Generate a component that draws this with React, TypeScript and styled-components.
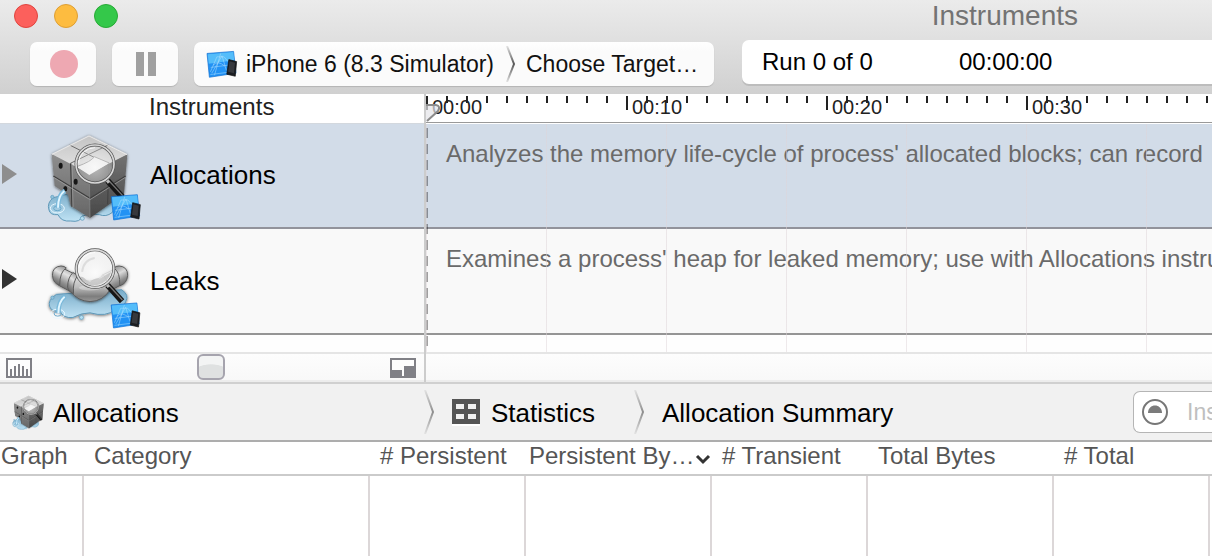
import React from "react";
import styled, { createGlobalStyle } from "styled-components";

const GlobalStyle = createGlobalStyle`
  * { box-sizing: border-box; }
  html, body, #root { height: 100%; }
  body {
    margin: 0;
    overflow: hidden;
    background: #fff;
    color: #000;
    font: 24px "Liberation Sans", Arial, sans-serif;
  }
  button, input {
    font: inherit;
    color: inherit;
    margin: 0;
    padding: 0;
    border: 0;
    background: none;
  }
  svg { display: block; flex: none; }
`;

/* ---------- Window chrome ---------- */

const Window = styled.div`
  display: flex;
  flex-direction: column;
  min-height: 100%;
  overflow: hidden;
`;

const Chrome = styled.header`
  background: linear-gradient(#ebebeb, #dfdfdf 45%, #d0d0d0);
`;

const TitleRow = styled.div`
  display: flex;
  align-items: center;
  justify-content: space-between;
  height: 32px;
  padding: 0 134px 0 14px;
`;

const Lights = styled.div`
  display: flex;
  gap: 16px;
`;

const Light = styled.button<{ $fill: string; $edge: string }>`
  width: 24px;
  height: 24px;
  border-radius: 50%;
  background: ${(p) => p.$fill};
  border: 1px solid ${(p) => p.$edge};
`;

const Title = styled.h1`
  margin: 0;
  font-size: 28px;
  font-weight: 400;
  line-height: 32px;
  color: #737373;
`;

const Toolbar = styled.div`
  display: flex;
  align-items: flex-start;
  height: 62px;
  padding: 8px 0 0 30px;
`;

const ToolButton = styled.button`
  display: flex;
  align-items: center;
  justify-content: center;
  width: 66px;
  height: 44px;
  margin: 2px 16px 0 0;
  padding-left: 2px;
  border-radius: 7px;
  background: linear-gradient(#fff, #fbfbfb 20%);
  box-shadow: 0 1px 1px #b4b4b4;
`;

const TargetPath = styled.div`
  display: flex;
  align-items: center;
  width: 520px;
  height: 44px;
  margin: 2px 28px 0 0;
  padding-left: 12px;
  border-radius: 7px;
  background: linear-gradient(#fff, #fbfbfb 20%);
  box-shadow: 0 1px 1px #b4b4b4;
`;

const PathButton = styled.button<{ $width?: number }>`
  display: flex;
  align-items: center;
  gap: 8px;
  width: ${(p) => (p.$width ? `${p.$width}px` : "auto")};
  font-size: 23px;
  line-height: 44px;
  white-space: nowrap;
  color: #111;
`;

const PathGap = styled.span`
  width: 10px;
`;

const RunStatus = styled.div`
  display: flex;
  flex: 1;
  height: 44px;
  padding-left: 20px;
  border-radius: 7px 0 0 7px;
  background: #fff;
  box-shadow: 0 2px 0 #bdbdbd;
  line-height: 44px;
  white-space: nowrap;
`;

const RunLabel = styled.span`
  width: 197px;
`;

/* ---------- Track area ---------- */

const Workspace = styled.main`
  display: flex;
  border-bottom: 2px solid #d0d0d0;
`;

const InstrumentColumn = styled.section`
  width: 426px;
  flex: none;
  border-right: 2px solid #cccccc;
`;

const TimelineColumn = styled.section`
  flex: 1;
  min-width: 0;
`;

const ColumnTitle = styled.h2`
  height: 30px;
  margin: 0;
  padding-left: 149px;
  border-bottom: 1px solid #d3d8de;
  font-size: 24px;
  font-weight: 400;
  line-height: 25px;
  color: #222;
`;

const Ruler = styled.div`
  position: relative;
  display: flex;
  height: 30px;
  overflow: hidden;
  background:
    linear-gradient(#999, #999) 0 28px / 100% 1px no-repeat,
    linear-gradient(90deg, #222 2px, transparent 2px) 0 2px / 200px 14px repeat-x,
    linear-gradient(90deg, #222 2px, transparent 2px) 0 2px / 20px 7px repeat-x;
`;

const RulerLabel = styled.span`
  flex: none;
  width: 200px;
  padding-left: 6px;
  font-size: 20px;
  line-height: 26px;
  color: #222;
`;

const PlayheadHandle = styled.svg`
  position: absolute;
  left: 0;
  top: 10px;
`;

const TrackRow = styled.div<{ $selected?: boolean }>`
  display: flex;
  align-items: center;
  height: ${(p) => (p.$selected ? 105 : 106)}px;
  padding-left: 2px;
  border-bottom: 2px solid ${(p) => (p.$selected ? "#92939b" : "#959595")};
  background: ${(p) => (p.$selected ? "#d2dce8" : "#f9f9f9")};
`;

const Disclosure = styled.button`
  width: 16px;
  height: 24px;
  margin-right: 27px;
  padding-bottom: 4px;
`;

const TrackName = styled.span`
  margin-left: 5px;
  font-size: 26px;
`;

const TimelineBody = styled.div`
  position: relative;
  &::after {
    content: "";
    position: absolute;
    inset: 0;
    pointer-events: none;
    background: linear-gradient(90deg, rgba(222, 212, 216, 0.5) 1px, transparent 1px) 0 0 / 120px 100%;
  }
`;

const Playhead = styled.div`
  position: absolute;
  left: 0;
  top: 4px;
  bottom: 6px;
  width: 2px;
  background: repeating-linear-gradient(rgba(0, 0, 0, 0.36) 0 10px, transparent 10px 16px);
`;

const TimelineTrack = styled(TrackRow)`
  align-items: flex-start;
  padding: 16px 0 0 20px;
  overflow: hidden;
`;

const Description = styled.p`
  margin: 0;
  line-height: 28px;
  white-space: nowrap;
  color: #6a6a6a;
`;

const Spare = styled.div`
  height: 17px;
  background: #fefefe;
`;

const ControlStrip = styled.div`
  display: flex;
  align-items: center;
  height: 30px;
  padding: 0 8px 0 6px;
  border-top: 2px solid #e5e5e5;
  border-bottom: 2px solid #ededed;
  background: linear-gradient(#fdfdfd, #f8f8f8);
`;

const StripButton = styled.button`
  padding-top: 2px;
`;

const ZoomSlider = styled.input`
  flex: 1;
  min-width: 0;
  height: 26px;
  appearance: none;
  &::-webkit-slider-runnable-track {
    height: 26px;
  }
  &::-webkit-slider-thumb {
    appearance: none;
    width: 28px;
    height: 26px;
    border: 2px solid #a6a4ae;
    border-radius: 6px;
    background: radial-gradient(ellipse 22px 14px at 50% 100%, #dfe1e1 95%, #f3f4f4 100%);
  }
`;

/* ---------- Detail area ---------- */

const DetailBar = styled.nav`
  display: flex;
  align-items: center;
  height: 58px;
  border-bottom: 2px solid #adadad;
  background: #f1f1f1;
`;

const Crumb = styled.button<{ $width?: number; $gap?: number; $inset: number }>`
  display: flex;
  flex: none;
  align-items: center;
  gap: ${(p) => p.$gap ?? 0}px;
  width: ${(p) => (p.$width ? `${p.$width}px` : "auto")};
  padding-left: ${(p) => p.$inset}px;
  font-size: 26px;
  line-height: 56px;
  white-space: nowrap;
`;

const CrumbLabel = styled.span`
  padding-top: 2px;
  line-height: 54px;
`;

const SearchField = styled.label`
  display: flex;
  align-items: center;
  width: 79px;
  height: 42px;
  margin-left: auto;
  padding-left: 7px;
  border: 1px solid #b5b5b5;
  border-right: 0;
  border-radius: 7px 0 0 7px;
  background: #fff;
  overflow: hidden;
`;

const SearchInput = styled.input`
  width: 60px;
  flex: none;
  margin-left: 18px;
  font-size: 23px;
  outline: 0;
  &::placeholder {
    color: #bfbfbf;
    opacity: 1;
  }
`;

const TableArea = styled.div`
  display: flex;
  flex: 1;
`;

const DataTable = styled.table`
  width: 100%;
  table-layout: fixed;
  border-collapse: separate;
  border-spacing: 0;
`;

const HeadCell = styled.th<{ $inset: number }>`
  height: 34px;
  padding: 0 0 4px ${(p) => p.$inset}px;
  border-bottom: 2px solid #cbcbcb;
  font-weight: 400;
  line-height: 28px;
  text-align: left;
  white-space: nowrap;
  color: #555;
`;

const HeadContent = styled.span`
  display: flex;
  align-items: center;
  gap: 1px;
`;

const BodyCell = styled.td`
  height: 80px;
  border-right: 2px solid #dcd7d8;
  &:last-child { border-right: 0; }
`;

/* ---------- Drawings ---------- */

const Badge = () => (
  <g>
    <path d="M214 212L292 206L299 270L221 282Z" fill="#2292f4" stroke="#1170d0" strokeWidth="2" />
    <path d="M216 214L291 208L294 232L219 242Z" fill="#54bdfa" />
    <path
      d="M228 270L258 219L271 262M225 253L279 246M236 276L254 212M224 266L243 222H264L277 237M232 246Q246 232 266 249M224 274L287 266"
      fill="none" stroke="#b5e4ff" strokeWidth="2" opacity=".7"
    />
    <path d="M278 230L301 236L297 279L272 273Z" fill="#1b1d22" stroke="#111" strokeWidth="2" strokeLinejoin="round" />
    <path d="M280 235L296 239L293 270L276 266Z" fill="#36383d" />
  </g>
);

const Lens = ({ id, y }: { id: string; y: number }) => (
  <g transform={`translate(0 ${y})`}>
    <path d="M203 164L247 213" stroke="#161616" strokeWidth="18" />
    <path d="M202 159L248 209" stroke="#777" strokeWidth="4" />
    <path d="M196 157L207 170" stroke="#bbb" strokeWidth="9" />
    <circle cx="165" cy="114" r="56" fill={`url(#${id}-glass)`} />
    <circle cx="165" cy="114" r="57" fill="none" stroke="#555" strokeWidth="9" />
    <circle cx="165" cy="114" r="57" fill="none" stroke="#d8d8d8" strokeWidth="5" />
    <path d="M116 112A49 49 0 0 1 165 65" fill="none" stroke="#fff" strokeWidth="3" opacity=".8" />
  </g>
);

const Defs = ({ id }: { id: string }) => (
  <defs>
    <linearGradient id={`${id}-left`} x1="0" y1="0" x2="0" y2="1">
      <stop offset="0" stopColor="#8e8e8e" /><stop offset="1" stopColor="#666" />
    </linearGradient>
    <linearGradient id={`${id}-right`} x1="0" y1="0" x2="0" y2="1">
      <stop offset="0" stopColor="#727272" /><stop offset="1" stopColor="#484848" />
    </linearGradient>
    <linearGradient id={`${id}-top`} x1="0" y1="0" x2="0" y2="1">
      <stop offset="0" stopColor="#c3c3c3" /><stop offset="1" stopColor="#e6e6e6" />
    </linearGradient>
    <linearGradient id={`${id}-water`} x1="0" y1="0" x2="0" y2="1">
      <stop offset="0" stopColor="#78abc8" /><stop offset="1" stopColor="#bfe2f4" />
    </linearGradient>
    <linearGradient id={`${id}-elbow`} x1="0" y1="0" x2="0" y2="1">
      <stop offset="0" stopColor="#e2e2e2" /><stop offset=".45" stopColor="#bdbdbd" />
      <stop offset=".8" stopColor="#7d7d7d" /><stop offset="1" stopColor="#999" />
    </linearGradient>
    <linearGradient id={`${id}-armL`} x1=".7" y1="0" x2=".3" y2="1">
      <stop offset="0" stopColor="#9a9a9a" /><stop offset=".35" stopColor="#e2e2e2" />
      <stop offset=".7" stopColor="#8f8f8f" /><stop offset="1" stopColor="#5d5d5d" />
    </linearGradient>
    <linearGradient id={`${id}-armR`} x1=".3" y1="0" x2=".7" y2="1">
      <stop offset="0" stopColor="#9a9a9a" /><stop offset=".35" stopColor="#dadada" />
      <stop offset=".7" stopColor="#8f8f8f" /><stop offset="1" stopColor="#5d5d5d" />
    </linearGradient>
    <radialGradient id={`${id}-glass`} cx=".5" cy=".6" r=".6">
      <stop offset="0" stopColor="#fff" stopOpacity=".5" />
      <stop offset="1" stopColor="#ddd" stopOpacity=".2" />
    </radialGradient>
    <filter id={`${id}-shade`} x="-10%" y="-10%" width="120%" height="120%">
      <feDropShadow dx="0" dy="2" stdDeviation="5" floodOpacity=".6" />
    </filter>
  </defs>
);

const Spout = ({ y }: { y: number }) => (
  <g transform={`translate(0 ${y})`} fill="none">
    <ellipse cx="52" cy="247" rx="21" ry="14" stroke="#eaf8ff" strokeWidth="3" />
    <ellipse cx="52" cy="247" rx="11" ry="7" stroke="#6aa8ca" strokeWidth="3" />
    <path d="M75 194Q54 206 54 245" stroke="#79b8da" strokeWidth="14" />
    <path d="M73 195Q54 210 54 245" stroke="#e0f5ff" strokeWidth="6" />
  </g>
);

const CubeIcon = ({ id, width, height, badge }: { id: string; width: number; height: number; badge?: boolean }) => (
  <svg width={width} height={height} viewBox={badge ? "15 6 300 288" : "20 15 245 275"} aria-hidden="true">
    <Defs id={id} />
    <path
      d="M40 215Q20 230 27 252Q30 268 54 266Q64 288 92 285Q122 290 126 270Q150 262 178 266Q198 274 216 260Q232 244 218 225L150 195L80 205Z"
      fill={`url(#${id}-water)`} stroke="#5e98b8" strokeWidth="3"
    />
    <circle cx="37" cy="213" r="5" fill="#8fc3de" stroke="#5e98b8" strokeWidth="2" />
    <circle cx="127" cy="277" r="6" fill="#b5dff2" stroke="#5e98b8" strokeWidth="2" />
    <g filter={`url(#${id}-shade)`}>
      <path d="M35 84L148 137L150 276L92 240L84 206L44 180Z" fill={`url(#${id}-left)`} />
      <path d="M148 137L262 85L252 204L150 276Z" fill={`url(#${id}-right)`} />
      <path d="M35 84L147 28L262 85L148 143Z" fill={`url(#${id}-top)`} />
    </g>
    <path d="M40 150L150 217L257 150M92 112L96 242" fill="none" stroke="#3f3f3f" strokeWidth="4" />
    <path d="M206 112L203 235" fill="none" stroke="#404040" strokeWidth="3" />
    <path d="M89 57L204 115M205 57L91 112" fill="none" stroke="#6b6b6b" strokeWidth="3" />
    <path d="M41 154L150 221L256 154M96 114L99 244" fill="none" stroke="#a8a8a8" strokeWidth="2" />
    <path d="M148 143L150 276" fill="none" stroke="#8a8a8a" strokeWidth="2" />
    <path d="M36 85L147 30L261 86" fill="none" stroke="#e9e9e9" strokeWidth="3" />
    <ellipse cx="62" cy="119" rx="6" ry="9" fill="#161616" />
    <ellipse cx="107" cy="167" rx="6" ry="9" fill="#161616" />
    <ellipse cx="76" cy="188" rx="6" ry="8" fill="#161616" />
    <path d="M110 122A56 56 0 0 0 218 132L208 111L148 147Z" fill="#777" opacity=".9" />
    <path d="M110 122Q155 106 163 92L208 111L148 147Z" fill="#f2f2f2" />
    <path d="M110 122Q155 106 163 92L208 111" fill="none" stroke="#9a9a9a" strokeWidth="3" />
    <Spout y={0} />
    <Lens id={id} y={0} />
    {badge && <Badge />}
  </svg>
);

const PipeIcon = ({ id }: { id: string }) => (
  <svg width="100" height="95" viewBox="15 -3 300 288" aria-hidden="true">
    <Defs id={id} />
    <g filter={`url(#${id}-shade)`}>
      <path
        d="M48 180Q20 198 28 218Q34 234 58 230Q70 254 98 250Q124 236 150 236Q200 250 226 226Q250 228 258 202Q270 182 246 166Z"
        fill={`url(#${id}-water)`} stroke="#5e98b8" strokeWidth="3"
      />
      <circle cx="36" cy="190" r="5" fill="#8fc3de" stroke="#5e98b8" strokeWidth="2" />
      <circle cx="124" cy="250" r="6" fill="#b5dff2" stroke="#5e98b8" strokeWidth="2" />
    </g>
    <g filter={`url(#${id}-shade)`} strokeWidth="3" stroke="#5b5b5b" strokeLinejoin="round">
      <path d="M62 98L110 122L92 172L54 152Z" fill={`url(#${id}-armL)`} />
      <path d="M236 98L186 122L206 172L246 150Z" fill={`url(#${id}-armR)`} />
      <path d="M104 124Q150 156 192 122L212 164Q190 201 150 202Q112 200 92 172Z" fill={`url(#${id}-elbow)`} />
      <path d="M36 122Q36 96 62 94Q72 94 78 100Q58 112 58 152Q38 148 36 122Z" fill={`url(#${id}-armL)`} />
      <path d="M264 122Q264 96 238 94Q228 94 222 100Q242 112 240 154Q262 148 264 122Z" fill={`url(#${id}-armR)`} />
      <path d="M98 114L114 122Q96 142 100 178Q84 172 82 158Q82 130 98 114Z" fill={`url(#${id}-armL)`} />
    </g>
    <ellipse cx="150" cy="160" rx="34" ry="8" fill="#fff" opacity=".3" />
    <circle cx="165" cy="102" r="54" fill="#f6f6f6" opacity=".7" />
    <path d="M116 128Q128 122 140 138L150 142Q166 128 180 132L214 112A54 54 0 0 1 118 130Z" fill="#a9a9a9" opacity=".8" />
    <path d="M126 112Q130 76 164 70" fill="none" stroke="#d6d6d6" strokeWidth="6" />
    <Spout y={-8} />
    <Lens id={id} y={-12} />
    <Badge />
  </svg>
);

const SimulatorIcon = () => (
  <svg width="32" height="28" viewBox="211 202 94 82" aria-hidden="true"><Badge /></svg>
);

const Chevron = ({ id, width, height, color }: { id: string; width: number; height: number; color: string }) => (
  <svg width={width} height={height} viewBox={`0 0 ${width} ${height}`} aria-hidden="true">
    <defs>
      <linearGradient id={id} x1="0" y1="0" x2="0" y2="1">
        <stop offset="0" stopColor={color} stopOpacity=".15" />
        <stop offset=".5" stopColor={color} />
        <stop offset="1" stopColor={color} stopOpacity=".15" />
      </linearGradient>
    </defs>
    <path d={`M1 0L${width - 2} ${height / 2}L1 ${height}`} fill="none" stroke={`url(#${id})`} strokeWidth="2" />
  </svg>
);

const Triangle = ({ color }: { color: string }) => (
  <svg width="16" height="20" viewBox="0 0 16 20" aria-hidden="true">
    <path d="M0 0L15 10L0 20Z" fill={color} />
  </svg>
);

const ScaleIcon = () => (
  <svg width="26" height="20" viewBox="0 0 26 20" aria-hidden="true">
    <rect x="1" y="1" width="24" height="18" fill="#fdfdfd" stroke="#808086" strokeWidth="2" />
    <path d="M5 19V11M9 19V8M13 19V6M17 19V8M21 19V11" stroke="#808086" strokeWidth="2" />
  </svg>
);

const PaneIcon = () => (
  <svg width="26" height="20" viewBox="0 0 26 20" aria-hidden="true">
    <rect x="1" y="1" width="24" height="18" fill="#fdfdfd" stroke="#808086" strokeWidth="2" />
    <path d="M2 12H12V18H2ZM14 8H24V18H14Z" fill="#808086" />
  </svg>
);

const GridIcon = () => (
  <svg width="28" height="27" viewBox="0 0 28 27" aria-hidden="true">
    <path d="M0 25H28V27H0Z" fill="#fff" />
    <path fillRule="evenodd" d="M0 0H28V25H0ZM4 5V10H12V5ZM16 5V10H24V5ZM4 15V20H12V15ZM16 15V20H24V15Z" fill="#555" />
  </svg>
);

const FilterIcon = () => (
  <svg width="28" height="28" viewBox="0 0 28 28" aria-hidden="true">
    <circle cx="14" cy="14" r="12" fill="#fff" stroke="#777" strokeWidth="2" />
    <path d="M7 15C7 5 21 5 21 15Z" fill="#7b7b7b" />
  </svg>
);

/* ---------- Data ---------- */

const marks = ["00:00", "00:10", "00:20", "00:30"];

const columns = [
  { label: "Graph", width: 84, inset: 1 },
  { label: "Category", width: 286, inset: 10 },
  { label: "# Persistent", width: 156, inset: 10 },
  { label: "Persistent By…", width: 186, inset: 3, sorted: true },
  { label: "# Transient", width: 156, inset: 10 },
  { label: "Total Bytes", width: 186, inset: 10 },
  { label: "# Total", width: 156, inset: 10 },
];

export default function App() {
  return (
    <Window>
      <GlobalStyle />
      <Chrome>
        <TitleRow>
          <Lights>
            <Light $fill="#fc605c" $edge="#e0443e" aria-label="Close" />
            <Light $fill="#fdbc40" $edge="#de9f34" aria-label="Minimize" />
            <Light $fill="#34c84a" $edge="#27aa35" aria-label="Zoom" />
          </Lights>
          <Title>Instruments</Title>
        </TitleRow>
        <Toolbar>
          <ToolButton aria-label="Record">
            <svg width="28" height="28" viewBox="0 0 28 28"><circle cx="14" cy="14" r="14" fill="#eea8b2" /></svg>
          </ToolButton>
          <ToolButton aria-label="Pause">
            <svg width="20" height="24" viewBox="0 0 20 24"><path d="M0 0H8V24H0ZM12 0H20V24H12Z" fill="#a0a0a0" /></svg>
          </ToolButton>
          <TargetPath>
            <PathButton $width={300}>
              <SimulatorIcon />
              iPhone 6 (8.3 Simulator)
            </PathButton>
            <Chevron id="target-chevron" width={10} height={36} color="#555" />
            <PathGap />
            <PathButton>Choose Target…</PathButton>
          </TargetPath>
          <RunStatus>
            <RunLabel>Run 0 of 0</RunLabel>
            <span>00:00:00</span>
          </RunStatus>
        </Toolbar>
      </Chrome>

      <Workspace>
        <InstrumentColumn>
          <ColumnTitle>Instruments</ColumnTitle>
          <TrackRow $selected>
            <Disclosure aria-label="Expand Allocations"><Triangle color="#8e8e8e" /></Disclosure>
            <CubeIcon id="cube" width={100} height={96} badge />
            <TrackName>Allocations</TrackName>
          </TrackRow>
          <TrackRow>
            <Disclosure aria-label="Expand Leaks"><Triangle color="#333" /></Disclosure>
            <PipeIcon id="pipe" />
            <TrackName>Leaks</TrackName>
          </TrackRow>
          <Spare />
          <ControlStrip>
            <StripButton aria-label="Fit to scale"><ScaleIcon /></StripButton>
            <ZoomSlider type="range" min={0} max={100} defaultValue={50} aria-label="Timeline zoom" />
            <StripButton aria-label="Toggle detail pane"><PaneIcon /></StripButton>
          </ControlStrip>
        </InstrumentColumn>
        <TimelineColumn>
          <Ruler>
            {marks.map((mark) => <RulerLabel key={mark}>{mark}</RulerLabel>)}
            <PlayheadHandle width="15" height="19" viewBox="0 0 15 19" aria-hidden="true">
              <path d="M0 1H11Q15 3 12 7L0 18Z" fill="#e4e4e8" fillOpacity=".7" />
              <path d="M0 1H10Q15 2 12 7L1 17" fill="none" stroke="#8b8b8b" strokeWidth="2" />
            </PlayheadHandle>
          </Ruler>
          <TimelineBody>
            <TimelineTrack $selected>
              <Description>Analyzes the memory life-cycle of process' allocated blocks; can record</Description>
            </TimelineTrack>
            <TimelineTrack>
              <Description>Examines a process' heap for leaked memory; use with Allocations instru</Description>
            </TimelineTrack>
            <Spare />
            <Playhead />
          </TimelineBody>
          <ControlStrip />
        </TimelineColumn>
      </Workspace>

      <DetailBar aria-label="Detail path">
        <Crumb $width={424} $gap={8} $inset={11}>
          <CubeIcon id="crumb" width={34} height={36} />
          <CrumbLabel>Allocations</CrumbLabel>
        </Crumb>
        <Chevron id="crumb-chevron-1" width={11} height={44} color="#8d8d8d" />
        <Crumb $width={199} $gap={11} $inset={17}>
          <GridIcon />
          <CrumbLabel>Statistics</CrumbLabel>
        </Crumb>
        <Chevron id="crumb-chevron-2" width={11} height={44} color="#8d8d8d" />
        <Crumb $inset={17}>
          <CrumbLabel>Allocation Summary</CrumbLabel>
        </Crumb>
        <SearchField aria-label="Filter">
          <FilterIcon />
          <SearchInput type="text" placeholder="Ins" />
        </SearchField>
      </DetailBar>

      <TableArea>
        <DataTable>
          <colgroup>
            {columns.map((c) => <col key={c.label} width={c.width} />)}
            <col />
          </colgroup>
          <thead>
            <tr>
              {columns.map((c) => (
                <HeadCell key={c.label} $inset={c.inset} scope="col" aria-sort={c.sorted ? "descending" : undefined}>
                  <HeadContent>
                    {c.label}
                    {c.sorted && (
                      <svg width="16" height="26" viewBox="0 0 16 26" aria-hidden="true">
                        <path d="M2 13L8 19L14 13" fill="none" stroke="#333" strokeWidth="3" />
                      </svg>
                    )}
                  </HeadContent>
                </HeadCell>
              ))}
              <HeadCell as="td" $inset={0} />
            </tr>
          </thead>
          <tbody>
            <tr>
              {columns.map((c) => <BodyCell key={c.label} />)}
              <BodyCell />
            </tr>
          </tbody>
        </DataTable>
      </TableArea>
    </Window>
  );
}
